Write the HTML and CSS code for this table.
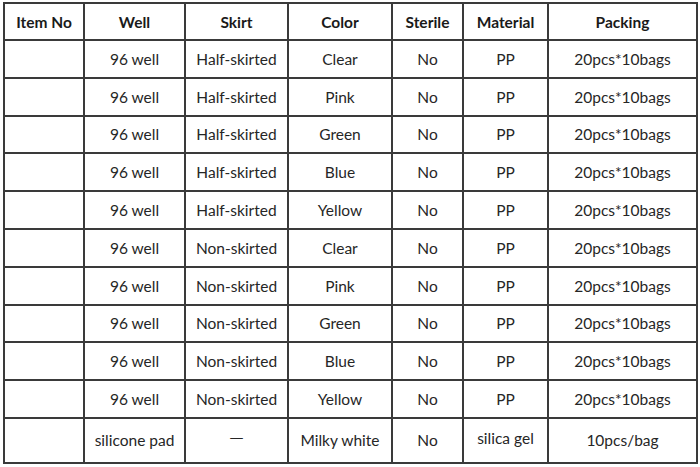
FILE: index.html
```html
<!DOCTYPE html>
<html>
<head>
<meta charset="utf-8">
<link rel="stylesheet" href="styles.css">
</head>
<body>
<table class="spec">
  <colgroup>
    <col class="c1"><col class="c2"><col class="c3"><col class="c4"><col class="c5"><col class="c6"><col class="c7">
  </colgroup>
  <thead>
    <tr class="head">
      <th>Item No</th><th>Well</th><th>Skirt</th><th>Color</th><th>Sterile</th><th>Material</th><th>Packing</th>
    </tr>
  </thead>
  <tbody>
    <tr class="row"><td></td><td>96 well</td><td>Half-skirted</td><td>Clear</td><td>No</td><td>PP</td><td>20pcs*10bags</td></tr>
    <tr class="row"><td></td><td>96 well</td><td>Half-skirted</td><td>Pink</td><td>No</td><td>PP</td><td>20pcs*10bags</td></tr>
    <tr class="row"><td></td><td>96 well</td><td>Half-skirted</td><td>Green</td><td>No</td><td>PP</td><td>20pcs*10bags</td></tr>
    <tr class="row"><td></td><td>96 well</td><td>Half-skirted</td><td>Blue</td><td>No</td><td>PP</td><td>20pcs*10bags</td></tr>
    <tr class="row"><td></td><td>96 well</td><td>Half-skirted</td><td>Yellow</td><td>No</td><td>PP</td><td>20pcs*10bags</td></tr>
    <tr class="row"><td></td><td>96 well</td><td>Non-skirted</td><td>Clear</td><td>No</td><td>PP</td><td>20pcs*10bags</td></tr>
    <tr class="row"><td></td><td>96 well</td><td>Non-skirted</td><td>Pink</td><td>No</td><td>PP</td><td>20pcs*10bags</td></tr>
    <tr class="row"><td></td><td>96 well</td><td>Non-skirted</td><td>Green</td><td>No</td><td>PP</td><td>20pcs*10bags</td></tr>
    <tr class="row"><td></td><td>96 well</td><td>Non-skirted</td><td>Blue</td><td>No</td><td>PP</td><td>20pcs*10bags</td></tr>
    <tr class="row"><td></td><td>96 well</td><td>Non-skirted</td><td>Yellow</td><td>No</td><td>PP</td><td>20pcs*10bags</td></tr>
    <tr class="last"><td></td><td>silicone pad</td><td class="dash">—</td><td>Milky white</td><td>No</td><td class="up">silica gel</td><td>10pcs/bag</td></tr>
  </tbody>
</table>
</body>
</html>
```
FILE: styles.css
```css
html, body {
  margin: 0;
  padding: 0;
  background: #ffffff;
}
body {
  padding: 2px 0 0 3px;
  font-family: Lato, "Liberation Sans", sans-serif;
  color: #262626;
}
.spec {
  table-layout: fixed;
  border-collapse: separate;
  border-spacing: 0;
  width: 695px;
  border-left: 2px solid #3a3a3a;
  border-top: 2px solid #3a3a3a;
}
.c1 { width: 80px; }
.c2 { width: 101px; }
.c3 { width: 103px; }
.c4 { width: 104px; }
.c5 { width: 71px; }
.c6 { width: 85px; }
.c7 { width: 149px; }
.spec th, .spec td {
  padding: 0;
  border-right: 2px solid #3a3a3a;
  border-bottom: 2px solid #3a3a3a;
  text-align: center;
  vertical-align: middle;
  white-space: nowrap;
  box-sizing: border-box;
}
.spec th {
  font-size: 15.5px;
  font-weight: 700;
  color: #1a1a1a;
}
.spec td {
  font-size: 15.5px;
  font-weight: 400;
}
.head { height: 37px; }
.row { height: 37.8px; }
.last { height: 45px; }
.spec td.up { padding-bottom: 4px; }
.spec td.dash {
  font-family: "DejaVu Sans", sans-serif;
  font-size: 14px;
  padding-bottom: 6px;
}
```
